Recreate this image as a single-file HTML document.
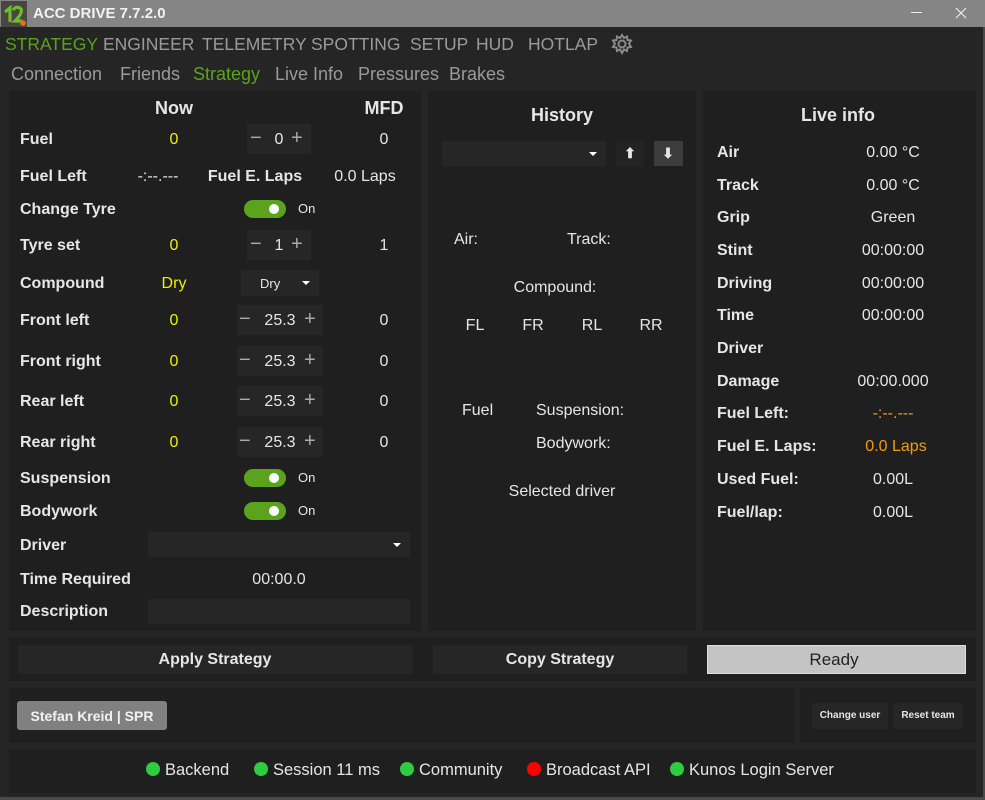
<!DOCTYPE html>
<html><head><meta charset="utf-8"><style>
*{margin:0;padding:0;box-sizing:border-box}
body{width:985px;height:800px;background:#252525;font-family:"Liberation Sans",sans-serif;color:#e6e6e6;position:relative;overflow:hidden;font-size:16px}
.a{position:absolute}
.t{position:absolute;line-height:20px;white-space:nowrap}
.c{transform:translateX(-50%)}
.b{font-weight:bold}
.y{color:#f0f000}
.o{color:#f39c12}
.p{position:absolute;background:#1f1f1f}
.tog{position:absolute;width:42px;height:18px;border-radius:9px;background:#5ba31d}
.tog:after{content:"";position:absolute;right:7px;top:4px;width:10px;height:10px;border-radius:50%;background:#fff}
.sp{position:absolute;background:#262626;height:30px}
.dd{position:absolute;background:#262626}
.dd:after{content:"";position:absolute;right:9px;top:50%;margin-top:-2px;border-left:4px solid transparent;border-right:4px solid transparent;border-top:4px solid #fff}
.dot{display:inline-block;width:14px;height:14px;border-radius:50%;background:#2ecc40;vertical-align:-1px;margin-right:5px}
.m{position:absolute;top:34px;font-size:17.5px;line-height:20px;color:#9a9a9a;white-space:nowrap}
</style></head><body>
<div class="a" style="left:0;top:0;width:985px;height:27px;background:#858585"></div>
<div class="a" style="left:1px;top:1px;width:26px;height:26px;background:#4a4540"></div>
<svg class="a" style="left:2px;top:2px" width="24" height="24" viewBox="0 0 24 24"><path d="M3 10 L8 6 L8 20" fill="none" stroke="#6bbf2a" stroke-width="3.2"/><path d="M11 8 Q15 3 19 7 Q21 11 13 19 L20 19" fill="none" stroke="#6bbf2a" stroke-width="3.2"/><circle cx="21" cy="21" r="2.8" fill="#f36b21"/></svg>
<div class="t b" style="left:33px;top:4px;color:#f2f2f2;font-size:15px">ACC DRIVE 7.7.2.0</div>
<div class="a" style="left:911px;top:12px;width:11px;height:1px;background:#eee"></div>
<svg class="a" style="left:955px;top:7px" width="12" height="12" viewBox="0 0 12 12"><path d="M1 1 L11 11 M11 1 L1 11" stroke="#eee" stroke-width="1.2"/></svg>
<div class="a" style="left:983px;top:27px;width:2px;height:773px;background:#4a4a4a"></div>
<div class="a" style="left:0;top:797px;width:985px;height:3px;background:#4a4a4a"></div>
<div class="m" style="left:5px;color:#5ba31d">STRATEGY</div>
<div class="m" style="left:103px">ENGINEER</div>
<div class="m" style="left:202px">TELEMETRY</div>
<div class="m" style="left:311px">SPOTTING</div>
<div class="m" style="left:410px">SETUP</div>
<div class="m" style="left:476px">HUD</div>
<div class="m" style="left:528px">HOTLAP</div>
<svg class="a" style="left:611px;top:33px" width="22" height="22" viewBox="0 0 22 22"><g fill="none" stroke="#8a8a8a" stroke-width="2"><circle cx="11" cy="11" r="3.5"/><path d="M11 2 L13 5 L16 3.5 L16.5 7 L20 7.5 L18 10.5 L20 14 L16.5 14.5 L16 18 L13 16.5 L11 20 L9 16.5 L6 18 L5.5 14.5 L2 14 L4 10.5 L2 7.5 L5.5 7 L6 3.5 L9 5 Z"/></g></svg>
<div class="t" style="left:11px;top:64px;font-size:18px;color:#9a9a9a">Connection</div>
<div class="t" style="left:120px;top:64px;font-size:18px;color:#9a9a9a">Friends</div>
<div class="t" style="left:193px;top:64px;font-size:18px;color:#5ba31d">Strategy</div>
<div class="t" style="left:275px;top:64px;font-size:18px;color:#9a9a9a">Live Info</div>
<div class="t" style="left:358px;top:64px;font-size:18px;color:#9a9a9a">Pressures</div>
<div class="t" style="left:449px;top:64px;font-size:18px;color:#9a9a9a">Brakes</div>
<div class="p" style="left:9px;top:91px;width:412px;height:540px"></div>
<div class="p" style="left:428px;top:91px;width:268px;height:540px"></div>
<div class="p" style="left:703px;top:91px;width:273px;height:540px"></div>
<div class="p" style="left:9px;top:637px;width:967px;height:44px"></div>
<div class="p" style="left:9px;top:688px;width:785px;height:55px"></div>
<div class="p" style="left:800px;top:688px;width:176px;height:55px"></div>
<div class="p" style="left:9px;top:749px;width:967px;height:44px"></div>
<div class="t b c" style="left:174px;top:98px;font-size:18px">Now</div>
<div class="t b c" style="left:384px;top:98px;font-size:18px">MFD</div>
<div class="t b" style="left:20px;top:130px">Fuel</div>
<div class="t y c" style="left:174px;top:130px">0</div>
<div class="sp" style="left:247px;top:124px;width:64px"></div>
<div class="t" style="left:250px;top:128px;font-size:20px;color:#aaa">−</div>
<div class="t c" style="left:279px;top:130px">0</div>
<div class="t" style="left:291px;top:128px;font-size:20px;color:#aaa">+</div>
<div class="t c" style="left:384px;top:130px">0</div>
<div class="t b" style="left:20px;top:167px">Fuel Left</div>
<div class="t c" style="left:158px;top:167px">-:--.---</div>
<div class="t b c" style="left:255px;top:167px">Fuel E. Laps</div>
<div class="t c" style="left:365px;top:167px">0.0 Laps</div>
<div class="t b" style="left:20px;top:200px">Change Tyre</div>
<div class="tog" style="left:244px;top:200px"></div>
<div class="t" style="left:298px;top:199px;font-size:13px">On</div>
<div class="t b" style="left:20px;top:236px">Tyre set</div>
<div class="t y c" style="left:174px;top:236px">0</div>
<div class="sp" style="left:247px;top:230px;width:64px"></div>
<div class="t" style="left:250px;top:234px;font-size:20px;color:#aaa">−</div>
<div class="t c" style="left:279px;top:236px">1</div>
<div class="t" style="left:291px;top:234px;font-size:20px;color:#aaa">+</div>
<div class="t c" style="left:384px;top:236px">1</div>
<div class="t b" style="left:20px;top:274px">Compound</div>
<div class="t y c" style="left:174px;top:274px">Dry</div>
<div class="dd" style="left:241px;top:270px;width:78px;height:26px"></div>
<div class="t" style="left:260px;top:274px;font-size:13px">Dry</div>
<div class="t b" style="left:20px;top:311px">Front left</div>
<div class="t y c" style="left:174px;top:311px">0</div>
<div class="sp" style="left:237px;top:305px;width:86px"></div>
<div class="t" style="left:239px;top:309px;font-size:20px;color:#aaa">−</div>
<div class="t c" style="left:280px;top:311px">25.3</div>
<div class="t" style="left:304px;top:309px;font-size:20px;color:#aaa">+</div>
<div class="t c" style="left:384px;top:311px">0</div>
<div class="t b" style="left:20px;top:352px">Front right</div>
<div class="t y c" style="left:174px;top:352px">0</div>
<div class="sp" style="left:237px;top:346px;width:86px"></div>
<div class="t" style="left:239px;top:350px;font-size:20px;color:#aaa">−</div>
<div class="t c" style="left:280px;top:352px">25.3</div>
<div class="t" style="left:304px;top:350px;font-size:20px;color:#aaa">+</div>
<div class="t c" style="left:384px;top:352px">0</div>
<div class="t b" style="left:20px;top:392px">Rear left</div>
<div class="t y c" style="left:174px;top:392px">0</div>
<div class="sp" style="left:237px;top:386px;width:86px"></div>
<div class="t" style="left:239px;top:390px;font-size:20px;color:#aaa">−</div>
<div class="t c" style="left:280px;top:392px">25.3</div>
<div class="t" style="left:304px;top:390px;font-size:20px;color:#aaa">+</div>
<div class="t c" style="left:384px;top:392px">0</div>
<div class="t b" style="left:20px;top:433px">Rear right</div>
<div class="t y c" style="left:174px;top:433px">0</div>
<div class="sp" style="left:237px;top:427px;width:86px"></div>
<div class="t" style="left:239px;top:431px;font-size:20px;color:#aaa">−</div>
<div class="t c" style="left:280px;top:433px">25.3</div>
<div class="t" style="left:304px;top:431px;font-size:20px;color:#aaa">+</div>
<div class="t c" style="left:384px;top:433px">0</div>
<div class="t b" style="left:20px;top:469px">Suspension</div>
<div class="tog" style="left:244px;top:469px"></div>
<div class="t" style="left:298px;top:468px;font-size:13px">On</div>
<div class="t b" style="left:20px;top:502px">Bodywork</div>
<div class="tog" style="left:244px;top:502px"></div>
<div class="t" style="left:298px;top:501px;font-size:13px">On</div>
<div class="t b" style="left:20px;top:536px">Driver</div>
<div class="dd" style="left:148px;top:532px;width:262px;height:25px"></div>
<div class="t b" style="left:20px;top:570px">Time Required</div>
<div class="t c" style="left:279px;top:570px">00:00.0</div>
<div class="t b" style="left:20px;top:602px">Description</div>
<div class="a" style="left:148px;top:599px;width:262px;height:25px;background:#262626"></div>
<div class="t b c" style="left:562px;top:105px;font-size:18px">History</div>
<div class="dd" style="left:442px;top:141px;width:164px;height:25px"></div>
<div class="a" style="left:616px;top:141px;width:28px;height:25px;background:#232323"></div>
<div class="t b c" style="left:630px;top:143px;font-size:14px">⬆</div>
<div class="a" style="left:654px;top:141px;width:29px;height:25px;background:#3c3c3c"></div>
<div class="t b c" style="left:668px;top:143px;font-size:14px">⬇</div>
<div class="t" style="left:454px;top:230px">Air:</div>
<div class="t" style="left:567px;top:230px">Track:</div>
<div class="t c" style="left:555px;top:278px">Compound:</div>
<div class="t c" style="left:475px;top:316px">FL</div>
<div class="t c" style="left:533px;top:316px">FR</div>
<div class="t c" style="left:592px;top:316px">RL</div>
<div class="t c" style="left:651px;top:316px">RR</div>
<div class="t" style="left:462px;top:401px">Fuel</div>
<div class="t" style="left:536px;top:401px">Suspension:</div>
<div class="t" style="left:536px;top:434px">Bodywork:</div>
<div class="t c" style="left:562px;top:482px">Selected driver</div>
<div class="t b c" style="left:838px;top:105px;font-size:18px">Live info</div>
<div class="t b" style="left:717px;top:143px">Air</div><div class="t c" style="left:893px;top:143px">0.00 °C</div>
<div class="t b" style="left:717px;top:176px">Track</div><div class="t c" style="left:893px;top:176px">0.00 °C</div>
<div class="t b" style="left:717px;top:208px">Grip</div><div class="t c" style="left:893px;top:208px">Green</div>
<div class="t b" style="left:717px;top:241px">Stint</div><div class="t c" style="left:893px;top:241px">00:00:00</div>
<div class="t b" style="left:717px;top:274px">Driving</div><div class="t c" style="left:893px;top:274px">00:00:00</div>
<div class="t b" style="left:717px;top:306px">Time</div><div class="t c" style="left:893px;top:306px">00:00:00</div>
<div class="t b" style="left:717px;top:339px">Driver</div>
<div class="t b" style="left:717px;top:372px">Damage</div><div class="t c" style="left:893px;top:372px">00:00.000</div>
<div class="t b" style="left:717px;top:404px">Fuel Left:</div><div class="t c o" style="left:893px;top:404px">-:--.---</div>
<div class="t b" style="left:717px;top:437px">Fuel E. Laps:</div><div class="t c o" style="left:896px;top:437px">0.0 Laps</div>
<div class="t b" style="left:717px;top:470px">Used Fuel:</div><div class="t c" style="left:893px;top:470px">0.00L</div>
<div class="t b" style="left:717px;top:503px">Fuel/lap:</div><div class="t c" style="left:893px;top:503px">0.00L</div>
<div class="a" style="left:18px;top:645px;width:395px;height:29px;background:#262626"></div>
<div class="t b c" style="left:215px;top:650px">Apply Strategy</div>
<div class="a" style="left:433px;top:645px;width:254px;height:29px;background:#262626"></div>
<div class="t b c" style="left:560px;top:650px">Copy Strategy</div>
<div class="a" style="left:707px;top:645px;width:259px;height:29px;background:#c4c4c4;border:1px solid #ddd"></div>
<div class="t c" style="left:834px;top:650px;color:#222;font-size:17px">Ready</div>
<div class="a" style="left:17px;top:701px;width:150px;height:29px;background:#808080;border-radius:3px"></div>
<div class="t b c" style="left:92px;top:706px;font-size:14px;color:#f2f2f2">Stefan Kreid | SPR</div>
<div class="a" style="left:812px;top:703px;width:76px;height:26px;background:#262626"></div>
<div class="t b c" style="left:850px;top:706px;font-size:10px">Change user</div>
<div class="a" style="left:893px;top:703px;width:70px;height:26px;background:#262626"></div>
<div class="t b c" style="left:928px;top:706px;font-size:10px">Reset team</div>
<div class="t" style="left:146px;top:760px;font-size:16.5px"><span class="dot"></span>Backend</div>
<div class="t" style="left:254px;top:760px;font-size:16.5px"><span class="dot"></span>Session 11 ms</div>
<div class="t" style="left:400px;top:760px;font-size:16.5px"><span class="dot"></span>Community</div>
<div class="t" style="left:527px;top:760px;font-size:16.5px"><span class="dot" style="background:#f00"></span>Broadcast API</div>
<div class="t" style="left:670px;top:760px;font-size:16.5px"><span class="dot"></span>Kunos Login Server</div>
</body></html>
